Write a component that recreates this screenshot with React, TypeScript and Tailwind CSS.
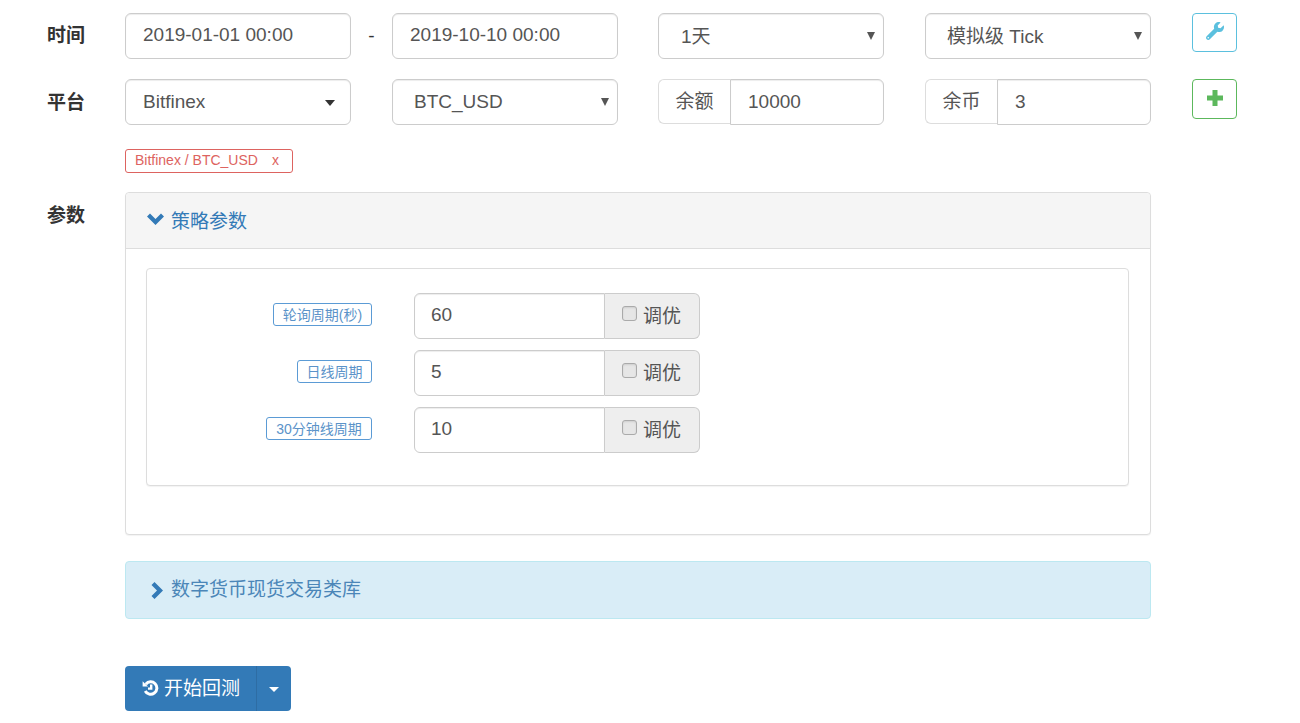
import React from "react";
import { FaWrench } from "react-icons/fa";

const field = "h-[46px] w-[226px] shrink-0 rounded-[6px] border border-[#ccc] bg-white shadow-[inset_0_1px_1px_rgba(0,0,0,0.075)] flex items-center text-[19px] text-[#555]";

function Select({ text, pad, small }: { text: string; pad: string; small?: boolean }) {
  return (
    <div className={`${field} relative ${pad}`}>
      <span className={small ? "relative top-[1px]" : ""}>{text}</span>
      <svg width="8" height="9" viewBox="0 0 8 9" className="absolute right-[8px] top-[17px]">
        <path d="M0 1h8L4 9z" fill="#555" />
      </svg>
    </div>
  );
}

function Addon({ label, value }: { label: string; value: string }) {
  return (
    <div className="flex h-[46px] w-[226px] shrink-0 text-[19px] text-[#555]">
      <div className="flex h-[45px] w-[72px] items-center justify-center rounded-l-[6px] border border-[#ddd] border-r-0 bg-white pt-[2px]">{label}</div>
      <div className="flex flex-1 items-center rounded-r-[6px] border border-[#ccc] bg-white pl-[17px] shadow-[inset_0_1px_1px_rgba(0,0,0,0.075)]">{value}</div>
    </div>
  );
}

function Param({ label, value, w }: { label: string; value: string; w: string }) {
  return (
    <div className="flex h-[46px] items-start">
      <div className="flex w-[225px] shrink-0 justify-end pt-[10px]">
        <span className={`flex h-[23px] ${w} items-center justify-center rounded-[3px] border border-[#5b9bd5] text-[14px] leading-none text-[#5b93c9]`}>{label}</span>
      </div>
      <div className="ml-[42px] flex h-[46px] w-[286px]">
        <div className="flex w-[191px] items-center rounded-l-[6px] border border-[#ccc] bg-white pb-[2px] pl-[16px] text-[19px] text-[#555] shadow-[inset_0_1px_1px_rgba(0,0,0,0.075)]">{value}</div>
        <div className="flex flex-1 items-center rounded-r-[6px] border border-l-0 border-[#ccc] bg-[#eee] pl-[17px] pt-[2px] text-[19px] text-[#555]">
          <span className="relative top-[-4px] mr-[6px] h-[15px] w-[15px] rounded-[3px] border border-[#aaa] bg-[#e6e6e6] shadow-[inset_0_1px_2px_rgba(0,0,0,0.1)]" />
          调优
        </div>
      </div>
    </div>
  );
}

function Label({ children }: { children: React.ReactNode }) {
  return <div className="w-[78px] shrink-0 text-[19px] font-bold leading-[26px] text-[#333]">{children}</div>;
}

export default function App() {
  return (
    <div
      className="h-[723px] w-[1300px] overflow-hidden bg-white pl-[47px] pt-[13px]"
      style={{ fontFamily: '"Liberation Sans","Noto Sans CJK SC",sans-serif' }}
    >
      <div className="flex items-start">
        <div className="pt-[10px]"><Label>时间</Label></div>
        <div className={`${field} pb-[2px] pl-[17px]`}>2019-01-01 00:00</div>
        <div className="w-[41px] shrink-0 pt-[9px] text-center text-[19px] text-[#333]">-</div>
        <div className={`${field} pb-[2px] pl-[17px]`}>2019-10-10 00:00</div>
        <div className="w-[40px] shrink-0" />
        <Select text="1天" pad="pl-[22px]" small />
        <div className="w-[41px] shrink-0" />
        <Select text="模拟级 Tick" pad="pl-[21px]" small />
        <div className="ml-[41px] flex h-[39px] w-[45px] items-center justify-center rounded-[4px] border border-[#5bc0de] bg-white text-[#5bc0de]">
          <FaWrench className="relative top-[-2px] h-[18px] w-[18px]" />
        </div>
      </div>

      <div className="mt-[20px] flex items-start">
        <div className="pt-[11px]"><Label>平台</Label></div>
        <div className={`${field} relative pl-[17px] text-[#444]`}>
          <span>Bitfinex</span>
          <span className="absolute right-[15px] top-[20px] h-0 w-0 border-x-[5px] border-t-[6px] border-x-transparent border-t-[#333]" />
        </div>
        <div className="w-[41px] shrink-0" />
        <Select text="BTC_USD" pad="pl-[21px]" />
        <div className="w-[40px] shrink-0" />
        <Addon label="余额" value="10000" />
        <div className="w-[41px] shrink-0" />
        <Addon label="余币" value="3" />
        <div className="ml-[41px] flex h-[40px] w-[45px] items-center justify-center rounded-[4px] border border-[#5cb85c] bg-white">
          <svg width="16" height="16" viewBox="0 0 16 16" className="relative top-[-1px]">
            <path d="M5.5 0h5v5.5H16v5h-5.5V16h-5v-5.5H0v-5h5.5z" fill="#5cb85c" />
          </svg>
        </div>
      </div>

      <div className="ml-[78px] mt-[24px] flex h-[24px] w-[168px] items-center rounded-[3px] border border-[#dd6360] pb-[2px] pl-[9px] text-[14px] text-[#dd6360]">
        Bitfinex / BTC_USD
        <span className="ml-[14px]">x</span>
      </div>

      <div className="mt-[19px] flex items-start">
        <div className="pt-[11px]"><Label>参数</Label></div>
        <div className="w-[1026px]">
          <div className="h-[343px] rounded-[4px] border border-[#ddd] bg-white shadow-[0_1px_1px_rgba(0,0,0,0.05)]">
            <div className="flex h-[56px] items-center rounded-t-[4px] border-b border-[#ddd] bg-[#f5f5f5] pl-[21px] text-[19px] text-[#337ab7]">
              <svg width="17" height="12" viewBox="0 0 17 12" className="relative top-[-2px] mr-[7px]">
                <path d="M0 3.5L3 0.5L8.5 6L14 0.5L17 3.5L8.5 12z" fill="#337ab7" />
              </svg>
              <span className="relative top-[2px]">策略参数</span>
            </div>
            <div className="px-[20px] pt-[19px]">
              <div className="flex h-[218px] w-[983px] flex-col gap-[11px] rounded-[4px] border border-[#ddd] bg-white pt-[24px] shadow-[0_1px_1px_rgba(0,0,0,0.05)]">
                <Param label="轮询周期(秒)" value="60" w="w-[99px]" />
                <Param label="日线周期" value="5" w="w-[75px]" />
                <Param label="30分钟线周期" value="10" w="w-[106px]" />
              </div>
            </div>
          </div>

          <div className="mt-[26px] flex h-[58px] items-center rounded-[4px] border border-[#bce8f1] bg-[#d9edf7] pl-[25px] text-[19px] text-[#4b86b8]">
            <svg width="12" height="17" viewBox="0 0 12 17" className="mr-[8px]">
              <path d="M3.5 0L12 8.5L3.5 17L0.5 14L6 8.5L0.5 3z" fill="#337ab7" />
            </svg>
            数字货币现货交易类库
          </div>

          <div className="mt-[47px] flex h-[45px] w-[166px] rounded-[4px] bg-[#337ab7] text-white">
            <div className="flex w-[132px] items-center border-r border-[#2e6da4] pl-[17px] text-[19px]">
              <svg width="17" height="16" viewBox="0 0 17 16" className="relative top-[-1px] mr-[5px]">
                <path d="M3.8 4.2A6.2 6.2 0 1 1 3.2 11" fill="none" stroke="#fff" strokeWidth="3" />
                <path d="M0.6 1.2L6 6.4H0.6z" fill="#fff" />
                <path d="M9.2 4.4V8.6H6" fill="none" stroke="#fff" strokeWidth="2.4" />
              </svg>
              <span className="relative top-[1px]">开始回测</span>
            </div>
            <div className="flex flex-1 items-center justify-center">
              <span className="mt-[2px] h-0 w-0 border-x-[5px] border-t-[5px] border-x-transparent border-t-white" />
            </div>
          </div>
        </div>
      </div>
    </div>
  );
}
